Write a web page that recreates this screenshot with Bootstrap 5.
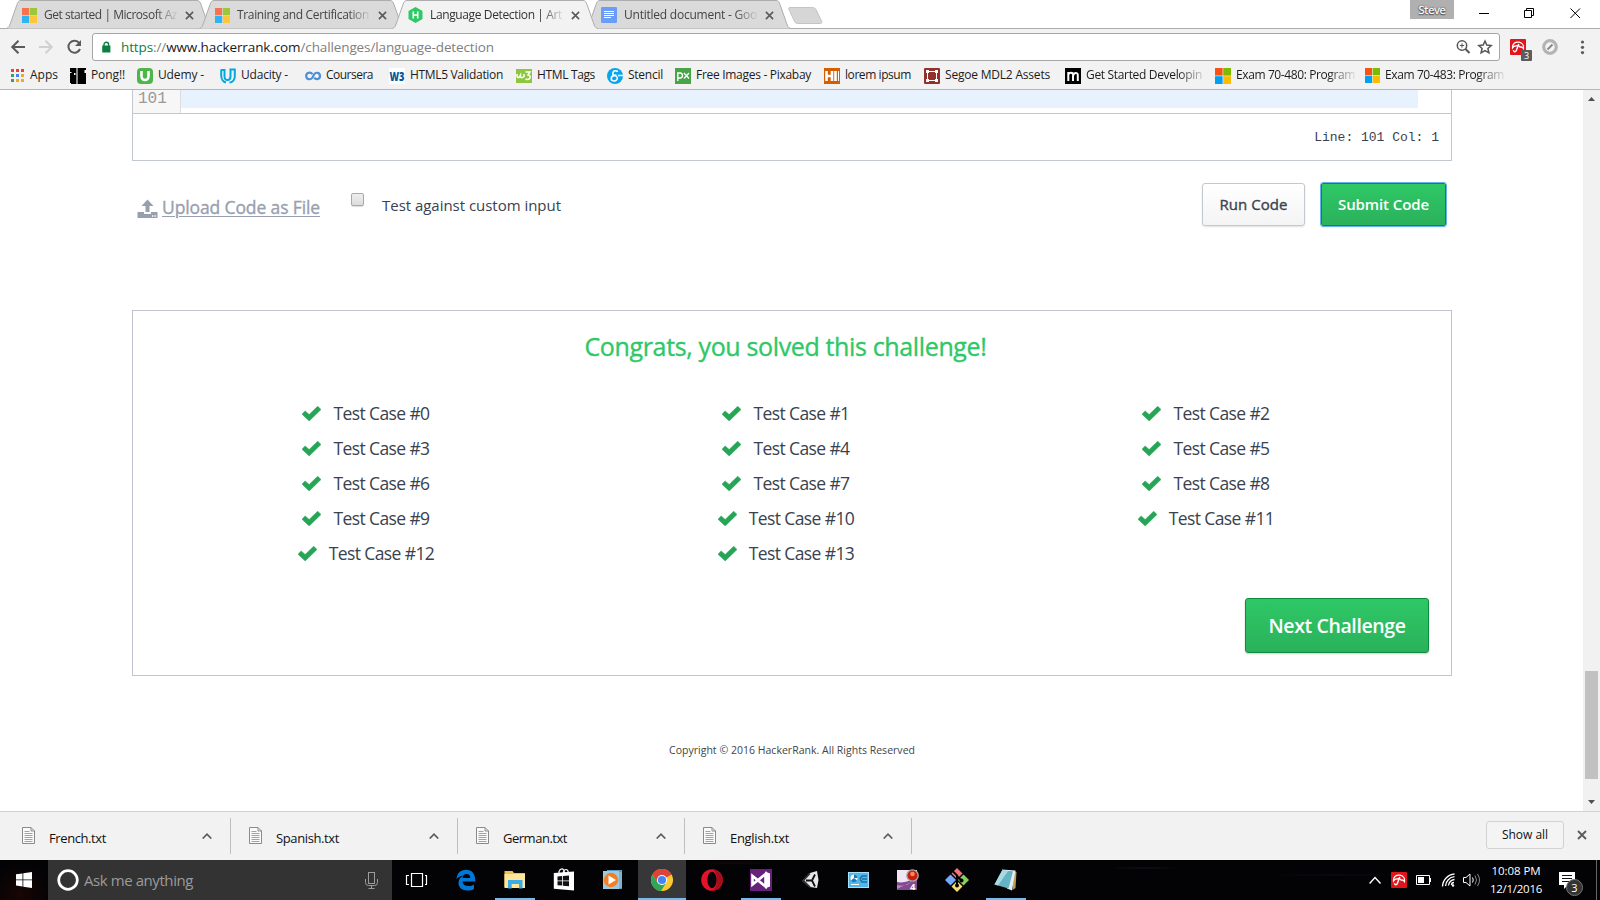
<!DOCTYPE html>
<html lang="en">
<head>
<meta charset="utf-8">
<title>Language Detection | Artificial Intelligence | HackerRank</title>
<link rel="stylesheet" href="https://cdn.jsdelivr.net/npm/bootstrap@5.3.0/dist/css/bootstrap.min.css">
<style>
  html, body { height: 900px; overflow: hidden; }
  body { width: 1600px; margin: 0; font-family: "Open Sans", "Noto Sans", sans-serif; font-size: 12px; line-height: 1; color: #222; background: #fff; }
  svg { display: block; flex: none; overflow: visible; }
  [data-w] { white-space: pre; flex: none; }

  /* tab strip */
  .tabstrip { height: 29px; padding-left: 6px; border-bottom: 1px solid #adadad; }
  .tabstrip > svg { align-self: flex-start; }
  .btab { width: 206px; height: 29px; margin-right: -13px; padding: 1px 0 0 16px; z-index: 1; color: #444; }
  .btab .shape { left: 0; top: 0; z-index: -1; }
  .btab.current { z-index: 2; color: #333; }
  .btab .ttl { width: 135px; margin-left: 7px; line-height: 18px; overflow: hidden; -webkit-mask-image: linear-gradient(90deg, #000 82%, transparent 100%); mask-image: linear-gradient(90deg, #000 82%, transparent 100%); }
  .btab .cls { margin-left: 6px; }
  .newtab { margin: 7px 0 0 10px; }
  .profile { width: 44px; height: 19px; background: #b0b0b0; color: #fff; font-size: 11px; text-shadow: 0 0 2px #222, 0 0 1px #222, 0 1px 1px #333; }

  /* toolbar */
  .toolbar { height: 38px; background: #f2f2f2; padding: 4px 0 0 10px; }
  .omnibox { width: 1408px; height: 28px; border: 1px solid #a5a5a5; border-radius: 3px; background: #fff; font-size: 13.5px; color: #808080; }
  .omnibox .addr { margin-left: 9px; padding-top: 2px; }
  .omnibox .sec { color: #0b8043; } .omnibox .host { color: #1a1a1a; }
  .marks { height: 23px; background: #f2f2f2; border-bottom: 1px solid #b6b4b6; padding-left: 11px;
    grid-template-columns: 59px 67px 83px 85px 84px 127px 91px 68px 149px 100px 141px 150px 150px 150px; color: #1c1c1c; }
  .marks > div { display: flex; align-items: center; gap: 5px; height: 17px; }
  .marks > div > span { padding-bottom: 2px; }
  .marks .fade-r { -webkit-mask-image: linear-gradient(90deg, #000 92px, transparent 122px); mask-image: linear-gradient(90deg, #000 92px, transparent 122px); }

  /* page */
  .viewport-area { height: 721px; }
  .page-col { width: 1320px; margin-left: 132px; }
  .editor { height: 71px; border: 1px solid #c2c7d0; border-top: 0; }
  .codeline { height: 24px; border-bottom: 1px solid #c2c7d0; }
  .gutter { width: 48px; background: #f7f7f7; border-right: 1px solid #ddd; color: #999; font: 16px/18px "Liberation Mono", monospace; padding-left: 5px; }
  .activeline { width: 1237px; height: 18px; background: #e8f2ff; }
  .status { height: 46px; font: 13px/16px "Liberation Mono", monospace; color: #39424e; padding: 2px 12px 0 0; }
  .semi { -webkit-text-stroke: .35px currentColor; }
  .upload { width: 209px; margin: 22px 0 0 5px; padding-top: 16px; color: #98a0b0; font-size: 17.5px; }
  .upload span { text-decoration: underline; text-decoration-thickness: 1px; text-underline-offset: 2px; }
  .chk { width: 13px; height: 13px; margin: 32px 0 0 5px; border: 1px solid #a9a9a9; border-radius: 2px; background: linear-gradient(#eee, #dcdcdc); box-shadow: 0 1px 1px #ddd; }
  .lbl { font-size: 15px; color: #39424e; margin: 37px 0 0 18px; }
  .acts { gap: 16px; margin: 22px 6px 0 0; }
  .btn-hr { padding: 0; border-radius: 3px; line-height: 1; display: flex; align-items: center; justify-content: center; font-weight: 600; }
  .btn-run { width: 103px; height: 43px; border: 1px solid #c2c7d0; background: linear-gradient(#fff, #f4f4f4); color: #39424e; font-size: 15px; font-weight: 400; box-shadow: 0 1px 2px rgba(0,0,0,.12); }
  .btn-go, .btn-go:hover { border: 1px solid #0d8b3d; background: linear-gradient(#2ec866, #2bb15b); color: #fff; box-shadow: 0 1px 2px rgba(0,0,0,.2); }
  .btn-submit { width: 125px; height: 43px; font-size: 15px; border-radius: 2px; outline: 1px solid #68b0ec; }
  .btn-next { width: 184px; height: 55px; font-size: 19.5px; }
  .btn-next span { padding-top: 1px; }
  .results { height: 366px; border: 1px solid #c2c3d1; margin-top: 84px; }
  .congrats { font-size: 25px; font-weight: 400; color: #2ec866; line-height: 30px; margin: 20px 0 0; width: 1305px; }
  .cases { grid-template-columns: repeat(3, 420px); grid-auto-rows: 35px; margin: 35px 0 0 23px; font-size: 17.5px; color: #39424e; }
  .cases > div { display: flex; align-items: center; justify-content: center; gap: 12px; }
  .nextrow { padding: 27px 22px 0 0; }
  .copyright { font-size: 10.5px; color: #444; margin-top: 66px; line-height: 16px; }
  .sbar { width: 17px; background: #f1f1f1; padding: 7px 0 7px; }
  .sbar .dn { margin-top: 21px; }
  .thumb { width: 13px; height: 108px; background: #c1c1c1; margin: 0 auto; }

  /* downloads */
  .shelf { height: 49px; background: #f2f2f2; border-top: 1px solid #d2d2d2; font-size: 13px; color: #111; }
  .dl { width: 227px; height: 36px; margin-top: 6px; border-right: 1px solid #bebebe; padding: 0 18px 0 22px; }
  .dl:first-child { width: 231px; }
  .dl + .dl { padding-left: 18px; }
  .dl svg:first-child { margin-top: -2px; }
  .fl { padding-top: 4px; margin-left: 14px; }
  .showall { width: 78px; height: 28px; margin-top: 9px; border: 1px solid #d2d2d2; border-radius: 3px; background: #f4f4f4; font-size: 12px; }
  .shelf-close { margin: 18px 13px 0 13px; }

  /* taskbar */
  .taskbar { height: 40px; color: #fff; background:
      radial-gradient(circle at 20px 34px, #190504 0, transparent 30px),
      radial-gradient(ellipse at 1145px 8px, #17121a 0, transparent 38px),
      radial-gradient(ellipse at 735px 3px, #150909 0, transparent 42px),
      radial-gradient(ellipse at 1335px 15px, #0d0b15 0, transparent 70px), #030305; }
  .search { width: 344px; background: #333; color: #9b9b9b; font-size: 15px; margin-right: 1px; }
  .tk { width: 48px; height: 40px; margin-right: 1.1px; display: flex; align-items: center; justify-content: center; border-bottom: 2px solid transparent; padding-top: 2px; }
  .tk.on { background: #37373a; border-color: #76b9ed; }
  .tk.run { background: linear-gradient(#76b9ed, #76b9ed) 50% 100%/40px 2px no-repeat; background-origin: border-box; background-clip: border-box; }
  .tray svg:first-child { margin-right: 1px; }
  .clock { font-size: 11.5px; line-height: 18px; width: 52px; }
  .note { margin: 1px 0 0 17px; }
  .cnt { left: 7px; top: 7px; width: 17px; height: 17px; border-radius: 50%; border: 1px solid #777; background: #333; font-size: 11px; }
  .peek { width: 1px; height: 40px; margin: 0 3px 0 20px; background: #666; }
</style>
</head>
<body class="d-flex flex-column">

<svg width="0" height="0" class="position-absolute">
  <defs>
    <symbol id="ms" viewBox="0 0 16 16"><path fill="#f6734f" d="M0 0h7.6v7.6H0z"/><path fill="#9dc63a" d="M8.4 0H16v7.6H8.4z"/><path fill="#2fb4f3" d="M0 8.4h7.6V16H0z"/><path fill="#fdc73a" d="M8.4 8.4H16V16H8.4z"/></symbol>
    <symbol id="ms2" viewBox="0 0 16 16"><path fill="#f65314" d="M0 0h7.6v7.6H0z"/><path fill="#7cbb00" d="M8.2 0H16v7.6H8.2z"/><path fill="#00a1f1" d="M0 8.2h7.6V16H0z"/><path fill="#ffbb00" d="M8.2 8.2H16V16H8.2z"/></symbol>
    <symbol id="tabshape" viewBox="0 0 206 29"><path d="M0.5 28.5 C3 27.5 3.5 26 4.500 23 L11 4.500 C12 1.500 13 .5 15 .5 H191 C193 .5 194 1.500 195 4.500 L201.500 23 C202.500 26 203 27.500 205.500 28.500" stroke="#adadad"/></symbol>
    <symbol id="x" viewBox="0 0 10 10"><path d="M1 1l8 8M9 1l-8 8" stroke="#5a5a5a" stroke-width="1.8"/></symbol>
    <symbol id="doc" viewBox="0 0 13 17"><path d="M.5.5h8.500l3.500 3.500v12.500H.5z" fill="#fafafa" stroke="#8a8a8a"/><path d="M9 .5V4h3.500" fill="none" stroke="#8a8a8a"/><path d="M2.500 4.500h5M2.500 6.500h8M2.500 8.500h8M2.500 10.500h8M2.500 12.500h8M2.500 14.500h8" stroke="#a2a2a2"/></symbol>
    <symbol id="up" viewBox="0 0 10 6"><path d="M.7 5.500L5 1.200l4.300 4.300" fill="none" stroke="#5c5c5c" stroke-width="1.700"/></symbol>
    <symbol id="tick" viewBox="0 0 18.500 14.500"><path fill="#27a556" d="M0 8L3 4.700 7 8.200 15.300.1 18.500 3.400 7 14.500z" stroke="#27a556" stroke-width=".5" stroke-linejoin="round"/></symbol>
    <symbol id="avira" viewBox="0 0 16 16"><rect width="16" height="16" rx="1" fill="#e2141c"/><path d="M2.500 9C2 5 5.500 2.500 9 3.200c3.500.7 5 3.500 4.500 6.300q-1.500-2-3.300-1.300Q8.500 5.500 6.300 7 4 6.700 2.500 9z" fill="none" stroke="#fff" stroke-width="1.300"/><path d="M8.800 5L6.300 11.500c-.7 2-3 1.500-2.800-.3" fill="none" stroke="#fff" stroke-width="1.400"/></symbol>
  </defs>
</svg>

<header>
  <div class="tabstrip d-flex align-items-start">
    <div class="btab position-relative d-flex align-items-center"><svg class="shape position-absolute" width="206" height="29" fill="#dadada"><use href="#tabshape"/></svg><svg width="15" height="15"><use href="#ms"/></svg><div class="ttl"><span data-w="133">Get started | Microsoft Az</span></div><svg class="cls" width="9" height="9"><use href="#x"/></svg></div>
    <div class="btab position-relative d-flex align-items-center"><svg class="shape position-absolute" width="206" height="29" fill="#dadada"><use href="#tabshape"/></svg><svg width="15" height="15"><use href="#ms"/></svg><div class="ttl"><span data-w="132">Training and Certification</span></div><svg class="cls" width="9" height="9"><use href="#x"/></svg></div>
    <div class="btab current position-relative d-flex align-items-center"><svg class="shape position-absolute" width="206" height="30" fill="#f2f2f2"><path d="M1 28h204v2H1z"/><use href="#tabshape" width="206" height="29"/></svg><svg width="15" height="16" viewBox="0 0 15 16"><path fill="#2ec866" d="M7.500 0L14.500 4v8l-7 4-7-4V4z"/><path d="M5.300 4.500v7M9.700 4.500v7M5.300 8h4.400" stroke="#fff" stroke-width="1.600"/></svg><div class="ttl"><span data-w="132">Language Detection | Art</span></div><svg class="cls" width="9" height="9"><use href="#x"/></svg></div>
    <div class="btab position-relative d-flex align-items-center"><svg class="shape position-absolute" width="206" height="29" fill="#dadada"><use href="#tabshape"/></svg><svg width="16" height="16" viewBox="0 0 16 16"><rect width="16" height="16" rx="1" fill="#6a9df8"/><path d="M3 4.500h10M3 6.500h10M3 8.500h10M3 10.500h7" stroke="#fff"/></svg><div class="ttl" id="lasttab"><span data-w="133">Untitled document - Goo</span></div><svg class="cls" width="9" height="9"><use href="#x"/></svg></div>
    <svg class="newtab" width="35" height="17"><path d="M.8 2Q.5.5 2 .5H24.500Q27 .5 28 2.500L33.800 14.500Q34.300 16.500 32.500 16.500H9.500Q7.500 16.500 6.500 14.500z" fill="#d6d6d6" stroke="#c4c4c4"/></svg>
    <div class="profile ms-auto d-flex align-items-center justify-content-center"><span class="semi" data-w="27">Steve</span></div>
    <svg width="146" height="28" fill="none" stroke="#000"><path d="M25 13.500h10M70.500 10.500h7v7h-7zM72.500 10v-1.500h7v7H78M116.500 8.500l9.500 9.500M126 8.500L116.500 18"/></svg>
  </div>
  <div class="toolbar d-flex">
    <svg width="82" height="28" fill="none" stroke="#5a5a5a" stroke-width="2"><path d="M15 14H2.500M8.500 7.700L2.200 14l6.300 6.300"/><path stroke="#d0d0d0" d="M29 14h12.500M35.500 7.700L41.800 14l-6.300 6.300"/><path d="M69.300 10.200A6 6 0 1 0 70 16"/><path d="M71 7v6h-6z" fill="#5a5a5a" stroke="none"/></svg>
    <div class="omnibox d-flex align-items-center">
      <svg class="ms-2 ps-0" width="11" height="12" viewBox="-1 0 11 12"><path d="M2 5V3.500a2.300 2.300 0 0 1 4.600 0V5" fill="none" stroke="#0b8043" stroke-width="1.400"/><path d="M.2 4.500h8.200V11.500H.2z" fill="#0b8043"/></svg>
      <span data-w="373" class="addr"><span class="sec">https</span>://<span class="host">www.hackerrank.com</span>/challenges/language-detection</span>
      <svg class="ms-auto me-2" width="35" height="16" fill="none" stroke="#555"><circle cx="6" cy="6.500" r="4.700" stroke-width="1.500"/><path d="M9.500 10l4 4" stroke-width="2"/><path d="M3.800 6.500h4.400M6 4.300v4.400"/><path stroke-width="1.500" d="M29 2l1.800 4 4.400.5-3.300 3 1 4.300-3.900-2.300-3.900 2.300 1-4.300-3.300-3 4.400-.5z"/></svg>
    </div>
    <svg width="96" height="32"><use href="#avira" x="10" y="6" width="16" height="16"/><rect x="21" y="17" width="11" height="11" rx="1" fill="#5c5c5c"/><text x="26.500" y="26.300" font-size="9" fill="#fff" text-anchor="middle">3</text><circle cx="50" cy="14" r="6.300" fill="#f5f5f5" stroke="#b4b4b4" stroke-width="3.200"/><path d="M47.500 16.500l5-5" stroke="#888" stroke-width="2"/><g fill="#5a5a5a"><circle cx="82.500" cy="9" r="1.600"/><circle cx="82.500" cy="14.300" r="1.600"/><circle cx="82.500" cy="19.600" r="1.600"/></g></svg>
  </div>
  <div class="marks d-grid">
    <div><svg width="14" height="14" viewBox="0 0 14 14"><path fill="#ea4335" d="M0 0h3v3H0zM5 0h3v3H5zM10 0h3v3h-3z"/><path fill="#34a05a" d="M0 5h3v3H0zM0 10h3v3H0z"/><path fill="#4285f4" d="M5 5h3v3H5z"/><path fill="#f4a724" d="M10 5h3v3h-3zM5 10h3v3H5zM10 10h3v3h-3z"/></svg><span data-w="28">Apps</span></div>
    <div><svg width="16" height="16"><path d="M0 0h6.500v16H0zM7.500 0H16v16H7.500z"/><path fill="#fff" d="M0 4h1.500v1H0zM0 15h1v1H0zM4 5h1.500v2H4zM14.500 2H16v3h-1.500z"/><path stroke="#999" d="M7 0v16"/></svg><span data-w="34">Pong!!</span></div>
    <div><svg width="16" height="16"><rect width="16" height="16" rx="4" fill="#4cb748"/><path d="M4.500 3v5.500a3.500 3.500 0 0 0 7 0V3" fill="none" stroke="#fff" stroke-width="2.600"/></svg><span data-w="46">Udemy -</span></div>
    <div><svg width="16" height="16" fill="none" stroke="#02a8e0" stroke-width="2"><path d="M1.200 1.500v6c0 4 2.500 6.500 4.800 7M1.200 2h3.300v6.500c0 5 6 4.500 6 0V1.500h4.300v7c0 3.500-2.600 6-5.300 6"/></svg><span data-w="47">Udacity -</span></div>
    <div><svg width="16" height="16" fill="none" stroke="#4a90d9" stroke-width="2.200"><path d="M7.500 6.200C5.500 3.500 1.200 4.500 1.200 8s4.300 4.400 6.300 1.500L9 6.500c2-3 6-1.800 6 1.500s-4 4.300-5.800 1.700"/></svg><span data-w="47">Coursera</span></div>
    <div><svg width="16" height="16"><path fill="#fff" d="M0 0h16v16H0z"/><text x="0.500" y="12.500" font-size="13" font-weight="800" fill="#005a9c" textLength="15" lengthAdjust="spacingAndGlyphs">W3</text></svg><span data-w="93">HTML5 Validation</span></div>
    <div><svg width="16" height="16"><path fill="#8dc63f" d="M0 1h16v14H0z"/><path d="M1 6v2q0 2 2 1.500L4.500 7v2Q6 10.500 8 8.500V6M9.500 4h4.500L12 7q2.800.5 2 3-1.500 2.500-4.500 1" fill="none" stroke="#fff" stroke-width="1.500"/></svg><span data-w="58">HTML Tags</span></div>
    <div><svg width="16" height="16"><circle cx="8" cy="8" r="8" fill="#08a4ed"/><path d="M16 7.500h-5M11 3.500Q7 1.500 6 4.500t3 3.500q2.500 2 .5 4t-5 0q-1-3 2-4.500l3-.5" fill="none" stroke="#fff" stroke-width="1.600"/></svg><span data-w="35">Stencil</span></div>
    <div><svg width="16" height="16"><path fill="#48a547" d="M0 0h16v16H0z"/><path d="M2.800 13V5h2.500q2.200.2 2.200 2.500T5.300 10H3M9 5l5 5.500M14 5l-5 5.500" fill="none" stroke="#fff" stroke-width="1.400"/></svg><span data-w="115">Free Images - Pixabay</span></div>
    <div><svg width="16" height="16"><path fill="#d35f00" d="M0 0h16v16H0z"/><path d="M2.500 3v10M8 3v10M2.500 8H8M11.500 3v10" stroke="#fff" stroke-width="2.600"/><path d="M14.500 3v10" stroke="#fff"/></svg><span data-w="66">lorem ipsum</span></div>
    <div><svg width="16" height="16"><rect width="16" height="16" rx="1" fill="#94302c"/><path d="M3.500 3.500h9v9h-9z" fill="none" stroke="#fff"/><path fill="#fff" d="M2 2h3v3H2zM11 2h3v3h-3zM2 11h3v3H2zM11 11h3v3h-3z"/></svg><span data-w="105">Segoe MDL2 Assets</span></div>
    <div><svg width="16" height="16"><path d="M0 0h16v16H0z"/><path d="M3.300 13V4M3.300 6.500Q5 4 7 5t1 3v5M8 7q2-3 4.300-1.500Q13 6 12.800 8v5" stroke="#fff" stroke-width="2" fill="none"/></svg><span class="fade-r" data-w="116">Get Started Developin</span></div>
    <div><svg width="16" height="16"><use href="#ms2"/></svg><span class="fade-r" data-w="119">Exam 70-480: Program</span></div>
    <div><svg width="15" height="15"><use href="#ms2"/></svg><span class="fade-r" data-w="119">Exam 70-483: Program</span></div>
  </div>
</header>

<main class="viewport-area d-flex justify-content-between">
  <div class="page-col">
    <div class="editor">
      <div class="codeline d-flex"><div class="gutter">101</div><div class="activeline"></div></div>
      <div class="status d-flex align-items-center justify-content-end">Line: 101 Col: 1</div>
    </div>
    <div class="d-flex align-items-start">
      <div class="upload d-flex"><svg class="me-1" width="21" height="20" viewBox="0 0 21 20"><path fill="#98a0b0" d="M10.500.5l6 6.500h-4v6h-4V7h-4zM.5 13h6.500v2h7v-2h6.500v6H.5z"/><path d="M15 17h1.300M17.500 17h1.300" stroke="#fff" stroke-width="1.300"/></svg><span class="semi" data-w="158">Upload Code as File</span></div>
      <div class="chk"></div>
      <span class="lbl" data-w="179">Test against custom input</span>
      <div class="acts d-flex ms-auto">
        <button class="btn btn-hr btn-run"><span class="semi" data-w="68">Run Code</span></button>
        <button class="btn btn-hr btn-go btn-submit"><span data-w="91">Submit Code</span></button>
      </div>
    </div>
    <section class="results">
      <h2 class="congrats d-flex justify-content-center"><span class="semi" data-w="402">Congrats, you solved this challenge!</span></h2>
      <div class="cases d-grid">
        <div><svg width="19" height="15"><use href="#tick"/></svg><span data-w="96">Test Case #0</span></div>
        <div><svg width="19" height="15"><use href="#tick"/></svg><span data-w="96">Test Case #1</span></div>
        <div><svg width="19" height="15"><use href="#tick"/></svg><span data-w="96">Test Case #2</span></div>
        <div><svg width="19" height="15"><use href="#tick"/></svg><span data-w="96">Test Case #3</span></div>
        <div><svg width="19" height="15"><use href="#tick"/></svg><span data-w="96">Test Case #4</span></div>
        <div><svg width="19" height="15"><use href="#tick"/></svg><span data-w="96">Test Case #5</span></div>
        <div><svg width="19" height="15"><use href="#tick"/></svg><span data-w="96">Test Case #6</span></div>
        <div><svg width="19" height="15"><use href="#tick"/></svg><span data-w="96">Test Case #7</span></div>
        <div><svg width="19" height="15"><use href="#tick"/></svg><span data-w="96">Test Case #8</span></div>
        <div><svg width="19" height="15"><use href="#tick"/></svg><span data-w="96">Test Case #9</span></div>
        <div><svg width="19" height="15"><use href="#tick"/></svg><span data-w="105.500">Test Case #10</span></div>
        <div><svg width="19" height="15"><use href="#tick"/></svg><span data-w="105.500">Test Case #11</span></div>
        <div><svg width="19" height="15"><use href="#tick"/></svg><span data-w="105.500">Test Case #12</span></div>
        <div><svg width="19" height="15"><use href="#tick"/></svg><span data-w="105.500">Test Case #13</span></div>
      </div>
      <div class="nextrow d-flex justify-content-end"><button class="btn btn-hr btn-go btn-next"><span data-w="137">Next Challenge</span></button></div>
    </section>
    <div class="copyright d-flex justify-content-center"><span data-w="246">Copyright © 2016 HackerRank. All Rights Reserved</span></div>
  </div>
  <div class="sbar d-flex flex-column">
    <svg class="mx-auto" width="7" height="4"><path d="M0 4L3.500 0 7 4z" fill="#505050"/></svg>
    <div class="thumb mt-auto"></div>
    <svg class="dn mx-auto" width="7" height="4"><path d="M0 0l3.500 4L7 0z" fill="#505050"/></svg>
  </div>
</main>

<div class="shelf d-flex">
  <div class="dl d-flex align-items-center"><svg width="13" height="17"><use href="#doc"/></svg><span class="fl" data-w="57">French.txt</span><svg class="ms-auto" width="10" height="6"><use href="#up"/></svg></div>
  <div class="dl d-flex align-items-center"><svg width="13" height="17"><use href="#doc"/></svg><span class="fl" data-w="63">Spanish.txt</span><svg class="ms-auto" width="10" height="6"><use href="#up"/></svg></div>
  <div class="dl d-flex align-items-center"><svg width="13" height="17"><use href="#doc"/></svg><span class="fl" data-w="64">German.txt</span><svg class="ms-auto" width="10" height="6"><use href="#up"/></svg></div>
  <div class="dl d-flex align-items-center"><svg width="13" height="17"><use href="#doc"/></svg><span class="fl" data-w="59">English.txt</span><svg class="ms-auto" width="10" height="6"><use href="#up"/></svg></div>
  <div class="showall ms-auto d-flex align-items-center justify-content-center"><span data-w="46">Show all</span></div>
  <svg class="shelf-close" width="10" height="10"><use href="#x"/></svg>
</div>

<footer class="taskbar d-flex">
  <svg width="48" height="40"><path fill="#fff" d="M16 14.300l6.500-.9v6.100H16zM23.300 13.300L32 12v7.500h-8.700zM16 20.300h6.500v6.200l-6.500-.9zM23.300 20.300H32V28l-8.700-1.300z"/></svg>
  <div class="search d-flex align-items-center"><svg width="36" height="40"><circle cx="20" cy="20" r="9.300" fill="none" stroke="#fff" stroke-width="2.700"/></svg><span data-w="109">Ask me anything</span><svg class="ms-auto" width="27" height="40" fill="none" stroke="#9b9b9b"><rect x="3.500" y="12.500" width="6" height="11"/><path d="M.5 19v3.500q0 3 3 3h6q3 0 3-3V19M6.500 25.500v3M3.500 28.500h6"/></svg></div>
  <div class="tk"><svg width="24" height="24" fill="none" stroke="#fff" stroke-width="1.200"><path d="M6.500 5.500h11v13h-11zM4 7.500H1.500v9H4M20 7.500h1.500v9H20"/></svg></div>
  <div class="tk"><svg width="22" height="22"><path fill="#0078d7" d="M1.500 10C2 4.500 5.500.8 11 .8c5.800 0 9 4 9.200 9.700v2H7.500c.3 3 2.600 4.600 6 4.600 2 0 4-.5 5.500-1.500v4.300C17 21 15 21.500 12.500 21.500 7 21.500 3.500 18.500 3.500 14c0-3.500 2-6 4.700-7.300C5.500 7 3 8 1.500 10zM7.600 9h7.700c0-2.500-1.500-3.900-3.800-3.900S7.900 6.700 7.600 9z"/></svg></div>
  <div class="tk run"><svg width="22" height="20"><path fill="#f0c24b" d="M.5 1h8l1.500 2h11v14H.5z"/><path fill="#ffe69a" d="M.5 4h20.500v14H.5z"/><path fill="#3cabe6" d="M4 10h14.500v8.500h-3.500V14H7.700v4.500H4z"/></svg></div>
  <div class="tk"><svg width="22" height="24"><path d="M6 6V3.500Q7 .8 9 .8T11.500 5M10 5Q11 1.500 13 1.500T15.500 5" fill="none" stroke="#fff" stroke-width="1.200"/><path fill="#fff" d="M.8 5L21 3.500v19L.8 20.700z"/><path fill="#111" d="M4.500 8.500l4.700-.4v4.400H4.500zM10 8l6-.5v5h-6zM4.500 13.300h4.700v4.300l-4.700-.4zM10 13.300h6v5l-6-.6z"/></svg></div>
  <div class="tk"><svg width="22" height="20"><path fill="#5b9abf" d="M5 0h15v19H5z"/><path fill="#9ccae4" d="M1 1h16v18H1z"/><path fill="#7fb4d3" d="M17 2h3v16h-3z"/><circle cx="9" cy="10" r="7.200" fill="#f57f20"/><path d="M6.500 5.500l7.500 4.500-7.500 4.500z" fill="#fff"/></svg></div>
  <div class="tk on"><svg width="22" height="22" viewBox="0 0 22 22"><circle cx="11" cy="11" r="11" fill="#fcc934"/><path d="M11 11L1.500 5.500A11 11 0 0 1 20.500 5.500z" fill="#db4437"/><path d="M11 11v-5h9.800A11 11 0 0 0 1.500 5.500L6.700 14z" fill="#db4437"/><path d="M1.500 5.500A11 11 0 0 0 10 22l5-8-4.500 2-4-2.500z" fill="#2fa556"/><circle cx="11" cy="11" r="5.100" fill="#fff"/><circle cx="11" cy="11" r="4.100" fill="#4285f4"/></svg></div>
  <div class="tk"><svg width="22" height="22"><ellipse cx="11" cy="11" rx="10.800" ry="10.800" fill="#e3142a"/><path d="M11 .2a10.800 10.800 0 0 1 0 21.600q5-2 5-10.800T11 .2z" fill="#a40e1d"/><ellipse cx="11" cy="11" rx="4.600" ry="8.300" fill="#080408"/></svg></div>
  <div class="tk run"><svg width="22" height="22"><path fill="#68217a" d="M0 0h22v22H0z"/><path fill="none" stroke="#fff" stroke-width="2.600" d="M2.500 7v8.500L15.500 5v12.500L2.500 7z"/><path fill="#fff" d="M15 2.500l5 2v13l-5 2z"/></svg></div>
  <div class="tk"><svg width="20" height="20"><path fill="#e8e8e8" d="M3 10.500L10 3l7-2 1.500 9-1.500 8-7-1z"/><path fill="#333" d="M1.500 11L9 3l1.500 1-6 6.500 6.500 6.500-1 1z"/><path d="M6 10.500h6l3-6M12 10.500l3 6" stroke="#111" stroke-width="1.800" fill="none"/></svg></div>
  <div class="tk"><svg width="21" height="16"><rect x=".5" y=".5" width="20" height="15" fill="#4fb7ea" stroke="#a6e0fb"/><circle cx="6" cy="6" r="3.500" fill="#fff"/><path d="M6 6V2.500A3.500 3.500 0 0 1 9.500 6zM6 6l3 2.500a3.500 3.500 0 0 1-6 0z" fill="#1d7ab8"/><path d="M12 7l2-3h5M14 7h5M12 7l2 3h5" stroke="#1c6ca8" stroke-width="1.500" fill="none"/><path d="M3 12.500h8" stroke="#fff"/></svg></div>
  <div class="tk"><svg width="22" height="22"><path fill="#eee6f3" d="M0 1h20v20H0z"/><path fill="#844a91" d="M0 13Q9 15 20 8v13H0z"/><path fill="#b889c1" d="M0 16q10 2 14-3L0 20z"/><circle cx="15.500" cy="6.500" r="5.700" fill="#c81c12" stroke="#a8a8a8" stroke-width="1.300"/><circle cx="15.500" cy="5" r="2.300" fill="#f68a50"/><text x="13" y="21" font-size="9.500" font-weight="700" fill="#fff">4</text></svg></div>
  <div class="tk"><svg width="24" height="24"><path fill="#ef7578" d="M12 0l5.500 5.500L12 11 6.500 5.500z"/><path fill="#75aaf8" d="M5.500 6.500L11 12l-5.500 5.500L0 12z"/><path fill="#8bcf60" d="M18.500 6.500L24 12l-5.500 5.500L13 12z"/><path fill="#f9dc70" d="M12 13l5.500 5.500L12 24l-5.500-5.500z"/><path d="M8 3.500l4 4V18M12 8l4 4" stroke="#000" stroke-width="2" fill="none"/><circle cx="12" cy="17.500" r="2"/><circle cx="16.500" cy="12.500" r="2"/></svg></div>
  <div class="tk run"><svg width="24" height="22"><path fill="#c69a4b" d="M20 2l2.500 1-1 16-3 2z"/><path fill="#e2eff2" d="M8 .5l13.500 1-3.500 20-5-2z"/><path fill="#67b3c6" d="M8 1.500l11 .7L14.500 19.500.5 15.500z"/><path fill="#a9dae3" d="M8 1.500l6 .4L4 16.400l-3.500-.9z"/></svg></div>
  <div class="tray ms-auto d-flex align-items-center">
    <svg width="120" height="40" fill="none" stroke="#fff"><path d="M.6 23.500L6 17.500l5.500 6" stroke-width="1.400"/><use href="#avira" x="22" y="12" width="16" height="16" stroke="none"/><path d="M47.500 15.500h13v9h-13zM61.500 18v4"/><path fill="#fff" stroke="none" d="M49 17h6v6h-6z"/><path stroke-width="1.300" d="M82.500 25A2.500 2.500 0 0 1 85 22.500M79.500 25.500a7 7 0 0 1 6-6M76.500 26a10 10 0 0 1 9-9.300M73.500 26.500a13 13 0 0 1 12-12.500"/><circle cx="84" cy="25.500" r="1.200" fill="#fff" stroke="none"/><path d="M94.500 17.500h2.500l4-3.500v12l-4-3.500h-2.500zM103.500 17.500q1.500 2.500 0 5"/><path stroke="#888" d="M106 15.500q3 4.500 0 9M108.500 14q4 6 0 12"/></svg>
    <div class="clock d-flex flex-column align-items-center"><span data-w="49">10:08 PM</span><span data-w="52">12/1/2016</span></div>
    <div class="note position-relative d-flex"><svg width="16" height="17"><path fill="#fff" d="M0 0h16v13H9l-4 4v-4H0z"/><path d="M3 3.500h10M3 6.500h10M3 9.500h7" stroke="#111"/></svg><span class="cnt position-absolute d-flex align-items-center justify-content-center">3</span></div>
    <div class="peek"></div>
  </div>
</footer>

<script src="https://cdn.jsdelivr.net/npm/bootstrap@5.3.0/dist/js/bootstrap.bundle.min.js"></script>
<script>
  // Track each label so that it fills its intended measure
  document.querySelectorAll('[data-w]').forEach(function (el) {
    var r = document.createRange();
    r.selectNodeContents(el);
    var w = r.getBoundingClientRect().width;
    el.style.letterSpacing = ((el.dataset.w - w) / el.textContent.length).toFixed(3) + 'px';
  });
</script>
</body>
</html>
